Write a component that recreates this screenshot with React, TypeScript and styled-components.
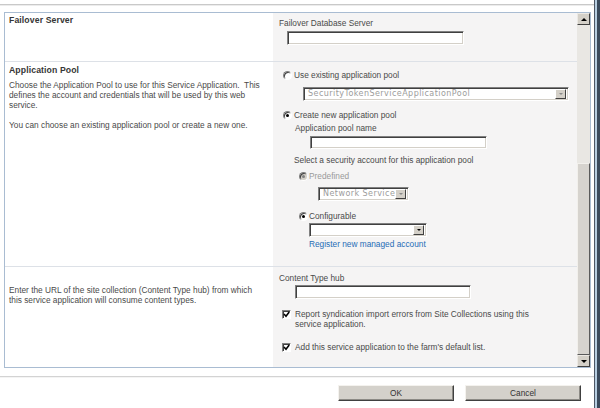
import styled, { createGlobalStyle } from "styled-components";

const GlobalStyle = createGlobalStyle`
  html, body {
    margin: 0;
    padding: 0;
    background: #ffffff;
  }
  body {
    font-family: "Liberation Sans", Arial, sans-serif;
    font-size: 8.3px;
    line-height: 10px;
    color: #4a4a4a;
  }
`;

const Screen = styled.div`
  display: flex;
  width: 600px;
  height: 408px;
  overflow: hidden;
`;
const Dialog = styled.div`
  width: 594px;
  display: flex;
  flex-direction: column;
`;
const WindowEdge = styled.div`
  width: 5px;
  border-left: 1px solid #4c5664;
  background: linear-gradient(to right, #b6cde0 0 2px, #3a4a5c 2px);
`;
const TopRule = styled.div`
  margin-top: 4px;
  height: 1px;
  border-top: 1px solid #c9c9c9;
  background: #ececec;
`;
const Panel = styled.div`
  margin: 6px 3px 0 4px;
  height: 354px;
  border: 1px solid #a9bcd2;
  display: flex;
`;
const Rows = styled.div`
  width: 572px;
  display: flex;
  flex-direction: column;
`;
const Row = styled.div<{ $h: number; $last?: boolean }>`
  height: ${(p) => p.$h}px;
  display: grid;
  grid-template-columns: 268px 304px;
  border-bottom: ${(p) => (p.$last ? "none" : "1px solid #dde1e7")};
`;
const Side = styled.div<{ $pt: number }>`
  background: #ffffff;
  padding: ${(p) => p.$pt}px 4px 0 4px;
`;
const Title = styled.div`
  font-size: 8.7px;
  font-weight: bold;
  color: #363636;
  margin-bottom: 5px;
  letter-spacing: 0.1px;
`;
const Desc = styled.p`
  margin: 0 0 10px 0;
  white-space: nowrap;
`;
const Body = styled.div`
  background: #f5f4f4;
  display: flex;
  flex-direction: column;
  align-items: flex-start;
`;
const Spot = styled.div<{ $mt: number; $ml: number }>`
  margin-top: ${(p) => p.$mt}px;
  margin-left: ${(p) => p.$ml}px;
`;
const Label = styled(Spot)`
  white-space: nowrap;
  height: 10px;
`;
const TextBox = styled(Spot)<{ $w: number; $h?: number }>`
  width: ${(p) => p.$w - 2}px;
  height: ${(p) => (p.$h ?? 14) - 2}px;
  background: #ffffff;
  border: 1px solid;
  border-color: #808080 #ffffff #ffffff #808080;
  box-shadow: inset 1px 1px #404040, inset -1px -1px #d4d0c8;
`;
const Select = styled(Spot)<{ $w: number; $off?: boolean }>`
  width: ${(p) => p.$w - 2}px;
  height: 12px;
  background: #ffffff;
  border: 1px solid;
  border-color: #808080 #ffffff #ffffff #808080;
  box-shadow: inset 1px 1px #404040, inset -1px -1px #d4d0c8;
  display: flex;
  align-items: center;
  justify-content: space-between;
  box-sizing: content-box;
  font-family: "DejaVu Sans", Verdana, sans-serif;
  font-size: 8px;
  letter-spacing: 0.45px;
  color: ${(p) => (p.$off ? "#9c9c9c" : "#222")};
  span {
    padding-left: 4px;
    white-space: nowrap;
    overflow: hidden;
  }
`;
const DropButton = styled.div<{ $off?: boolean }>`
  width: 9px;
  height: 8px;
  margin-right: 2px;
  flex: none;
  background: #d4d0c8;
  border: 1px solid;
  border-color: #ffffff #404040 #404040 #ffffff;
  display: flex;
  align-items: center;
  justify-content: center;
  &::after {
    content: "";
    border-left: 2px solid transparent;
    border-right: 2px solid transparent;
    border-top: 2px solid ${(p) => (p.$off ? "#8a8a8a" : "#000")};
  }
`;
const Choice = styled(Spot)<{ $gap: number; $dim?: boolean }>`
  display: flex;
  align-items: flex-start;
  gap: ${(p) => p.$gap}px;
  white-space: nowrap;
  color: ${(p) => (p.$dim ? "#9a9a9a" : "inherit")};
`;
const Radio = styled.span<{ $on?: boolean; $off?: boolean }>`
  position: relative;
  flex: none;
  width: 7px;
  height: 7px;
  margin-top: 1px;
  border-radius: 50%;
  border: 1px solid;
  border-color: #808080 #ffffff #ffffff #808080;
  background: ${(p) => (p.$off ? "#d4d0c8" : "#ffffff")};
  box-shadow: inset 1px 1px #404040;
  &::after {
    content: "";
    display: ${(p) => (p.$on ? "block" : "none")};
    position: absolute;
    left: 2px;
    top: 2px;
    width: 3px;
    height: 3px;
    border-radius: 50%;
    background: ${(p) => (p.$off ? "#808080" : "#000")};
  }
`;
const Check = styled.span`
  flex: none;
  width: 7px;
  height: 7px;
  margin-top: 1px;
  background: #ffffff;
  border: 1px solid;
  border-color: #808080 #ffffff #ffffff #808080;
  box-shadow: inset 1px 1px #404040;
  display: flex;
  align-items: center;
  justify-content: center;
  svg {
    display: block;
  }
`;
const Link = styled(Spot)`
  color: #1f6db6;
  white-space: nowrap;
`;
const Scrollbar = styled.div`
  width: 13px;
  display: flex;
  flex-direction: column;
  background: #e9e7e3;
`;
const ArrowButton = styled.div<{ $down?: boolean }>`
  height: 10px;
  background: #d4d0c8;
  border: 1px solid;
  border-color: #ece9e4 #404040 #404040 #ece9e4;
  display: flex;
  align-items: center;
  justify-content: center;
  &::after {
    content: "";
    border-left: 3px solid transparent;
    border-right: 3px solid transparent;
    ${(p) =>
      p.$down ? "border-top: 3px solid #000;" : "border-bottom: 3px solid #000;"}
  }
`;
const Track = styled.div`
  flex: 1;
  display: flex;
  flex-direction: column;
  justify-content: flex-end;
`;
const Thumb = styled.div`
  height: 190px;
  background: #d6d3ce;
  border: 1px solid;
  border-color: #f2f0ec #5a5a5a #5a5a5a #f2f0ec;
`;
const BottomRule = styled.div`
  margin-top: 8px;
  height: 1px;
  background: #d3d3d3;
  border-bottom: 1px solid #f4f4f4;
`;
const Actions = styled.div`
  display: flex;
  justify-content: flex-end;
  gap: 11px;
  margin: 7px 13px 0 0;
`;
const Button = styled.button`
  width: 116px;
  height: 16px;
  padding: 0;
  background: #d4d1cb;
  border: 1px solid;
  border-color: #f4f2ee #404040 #404040 #f4f2ee;
  box-shadow: inset -1px -1px #8c8a85;
  font-family: "Liberation Sans", Arial, sans-serif;
  font-size: 8.3px;
  color: #333;
`;

function Tick() {
  return (
    <svg width="7" height="7" viewBox="0 0 7 7">
      <path d="M1 3 L3 5.2 L6.2 1" fill="none" stroke="#000" strokeWidth="1.6" />
    </svg>
  );
}

export default function App() {
  return (
    <>
      <GlobalStyle />
      <Screen>
        <Dialog>
          <TopRule />
          <Panel>
            <Rows>
              <Row $h={48}>
                <Side $pt={2}>
                  <Title>Failover Server</Title>
                </Side>
                <Body>
                  <Label $mt={5} $ml={6}>Failover Database Server</Label>
                  <TextBox $mt={3} $ml={14} $w={177} />
                </Body>
              </Row>
              <Row $h={205}>
                <Side $pt={3}>
                  <Title>Application Pool</Title>
                  <Desc>
                    Choose the Application Pool to use for this Service Application.&nbsp; This
                    <br />
                    defines the account and credentials that will be used by this web
                    <br />
                    service.
                  </Desc>
                  <Desc>You can choose an existing application pool or create a new one.</Desc>
                </Side>
                <Body>
                  <Choice $mt={8} $ml={10} $gap={2}>
                    <Radio />
                    Use existing application pool
                  </Choice>
                  <Select $mt={7} $ml={30} $w={266} $off>
                    <span>SecurityTokenServiceApplicationPool</span>
                    <DropButton $off />
                  </Select>
                  <Choice $mt={9} $ml={10} $gap={2}>
                    <Radio $on />
                    Create new application pool
                  </Choice>
                  <Label $mt={3} $ml={22}>Application pool name</Label>
                  <TextBox $mt={3} $ml={37} $w={177} $h={13} />
                  <Label $mt={6} $ml={21}>Select a security account for this application pool</Label>
                  <Choice $mt={6} $ml={26} $gap={1} $dim>
                    <Radio $off $on />
                    Predefined
                  </Choice>
                  <Select $mt={6} $ml={45} $w={91} $off>
                    <span>Network Service</span>
                    <DropButton $off />
                  </Select>
                  <Choice $mt={10} $ml={26} $gap={1}>
                    <Radio $on />
                    Configurable
                  </Choice>
                  <Select $mt={2} $ml={36} $w={118}>
                    <span />
                    <DropButton />
                  </Select>
                  <Link $mt={2} $ml={36}>Register new managed account</Link>
                </Body>
              </Row>
              <Row $h={101} $last>
                <Side $pt={18}>
                  <Desc>
                    Enter the URL of the site collection (Content Type hub) from which
                    <br />
                    this service application will consume content types.
                  </Desc>
                </Side>
                <Body>
                  <Label $mt={6} $ml={6}>Content Type hub</Label>
                  <TextBox $mt={2} $ml={22} $w={176} />
                  <Choice $mt={10} $ml={9} $gap={4}>
                    <Check>
                      <Tick />
                    </Check>
                    <span>
                      Report syndication import errors from Site Collections using this
                      <br />
                      service application.
                    </span>
                  </Choice>
                  <Choice $mt={13} $ml={9} $gap={4}>
                    <Check>
                      <Tick />
                    </Check>
                    Add this service application to the farm's default list.
                  </Choice>
                </Body>
              </Row>
            </Rows>
            <Scrollbar>
              <ArrowButton />
              <Track>
                <Thumb />
              </Track>
              <ArrowButton $down />
            </Scrollbar>
          </Panel>
          <BottomRule />
          <Actions>
            <Button>OK</Button>
            <Button>Cancel</Button>
          </Actions>
        </Dialog>
        <WindowEdge />
      </Screen>
    </>
  );
}
